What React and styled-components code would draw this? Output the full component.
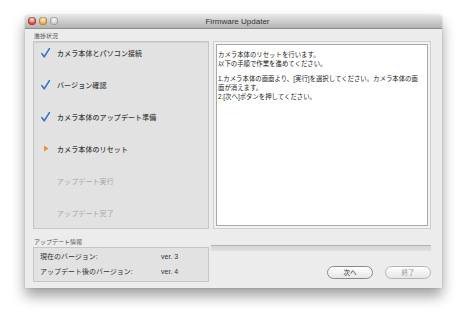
import styled, { createGlobalStyle } from "styled-components"

const GlobalStyle = createGlobalStyle`
  body {
    margin: 0;
    background: #ffffff;
    font-family: "Liberation Sans", "Noto Sans CJK JP", sans-serif;
  }
`

const steps = [
  { label: "カメラ本体とパソコン接続", state: "done" },
  { label: "バージョン確認", state: "done" },
  { label: "カメラ本体のアップデート準備", state: "done" },
  { label: "カメラ本体のリセット", state: "current" },
  { label: "アップデート実行", state: "todo" },
  { label: "アップデート完了", state: "todo" },
]

function Check() {
  return (
    <svg width="9" height="10" viewBox="0 0 9 10">
      <path d="M0.8 5.6 L3.2 8.8 L8.4 0.6" fill="none" stroke="#2c6cc4" strokeWidth="1.5" strokeLinecap="round" strokeLinejoin="round" />
    </svg>
  )
}

function Arrow() {
  return (
    <svg width="6" height="7" viewBox="0 0 6 7">
      <path d="M1 0.5 L5.5 3.5 L1 6.5 Z" fill="#f0902a" />
    </svg>
  )
}

export default function App() {
  return (
    <Page>
      <GlobalStyle />
      <Window>
        <TitleBar>
          <Lights>
            <Light color="#d9453b" />
            <Light color="#f2a53a" />
            <Light color="#c9c9c9" />
          </Lights>
          <Title>Firmware Updater</Title>
        </TitleBar>

        <Body>
          <Column>
            <SectionLabel>進捗状況</SectionLabel>
            <StepsPanel>
              {steps.map((s) => (
                <Step key={s.label} state={s.state}>
                  <Mark>
                    {s.state === "done" && <Check />}
                    {s.state === "current" && <Arrow />}
                  </Mark>
                  {s.label}
                </Step>
              ))}
            </StepsPanel>
            <SectionLabel small>アップデート情報</SectionLabel>
            <InfoBox>
              <InfoRow>
                <span>現在のバージョン:</span>
                <Ver>ver. 3</Ver>
              </InfoRow>
              <InfoRow>
                <span>アップデート後のバージョン:</span>
                <Ver>ver. 4</Ver>
              </InfoRow>
            </InfoBox>
          </Column>

          <Column>
            <SectionLabel />
            <TextFrame>
              <TextArea>
                <p>カメラ本体のリセットを行います。<br />以下の手順で作業を進めてください。</p>
                <p>1.カメラ本体の画面より、[実行]を選択してください。カメラ本体の画面が消えます。<br />2.[次へ]ボタンを押してください。</p>
              </TextArea>
            </TextFrame>
            <Progress />
            <Buttons>
              <Button>次へ</Button>
              <Button disabled>終了</Button>
            </Buttons>
          </Column>
        </Body>
      </Window>
    </Page>
  )
}

const Page = styled.div`
  width: 462px;
  height: 322px;
  padding: 15px 0 0 25px;
  box-sizing: border-box;
`
const Window = styled.div`
  width: 417px;
  height: 273px;
  background: #ececec;
  border-radius: 4px 4px 0 0;
  box-shadow: 0 8px 14px rgba(0, 0, 0, 0.38), 0 0 2px rgba(0, 0, 0, 0.2);
  display: flex;
  flex-direction: column;
  overflow: hidden;
`
const TitleBar = styled.div`
  height: 13px;
  position: relative;
  display: flex;
  align-items: center;
  justify-content: center;
  background: linear-gradient(#e6e6e6, #b3b3b3);
  border-bottom: 1px solid #8e8e8e;
`
const Lights = styled.div`
  position: absolute;
  left: 3px;
  top: 2px;
  display: flex;
  gap: 3px;
`
const Light = styled.div`
  width: 8px;
  height: 8px;
  border-radius: 50%;
  background: radial-gradient(circle at 50% 35%, #ffffff 0%, ${(p) => p.color} 55%);
  box-shadow: inset 0 0 0 0.5px rgba(0, 0, 0, 0.35);
`
const Title = styled.div`
  font-size: 8px;
  color: #333;
  margin-left: 8px;
`
const Body = styled.div`
  flex: 1;
  display: grid;
  grid-template-columns: 176px 218px;
  gap: 4px;
  padding: 0 0 0 8px;
`
const Column = styled.div`
  display: flex;
  flex-direction: column;
`
const SectionLabel = styled.div`
  height: 8px;
  margin: ${(p) => (p.small ? "9px 0 1px 1px" : "3px 0 1px 1px")};
  font-size: 6px;
  line-height: 8px;
  color: #555;
`
const StepsPanel = styled.div`
  height: 188px;
  box-sizing: border-box;
  background: #e2e2e2;
  border: 1px solid #c6c6c6;
  box-shadow: inset 0 1px 1px rgba(0, 0, 0, 0.08);
  display: flex;
  flex-direction: column;
  gap: 11px;
`
const Step = styled.div`
  height: 21px;
  display: flex;
  align-items: center;
  font-size: 7px;
  letter-spacing: 0.1px;
  color: ${(p) => (p.state === "todo" ? "#a6a6a6" : "#3a3a3a")};
  font-weight: ${(p) => (p.state === "todo" ? 400 : 500)};
`
const Mark = styled.span`
  width: 23px;
  display: flex;
  justify-content: center;
`
const InfoBox = styled.div`
  height: 35px;
  box-sizing: border-box;
  background: #e2e2e2;
  border: 1px solid #c6c6c6;
  display: flex;
  flex-direction: column;
  justify-content: center;
  gap: 7px;
  padding-left: 6px;
`
const InfoRow = styled.div`
  display: flex;
  font-size: 7px;
  line-height: 8px;
  color: #333;
  span:first-child {
    width: 121px;
  }
`
const Ver = styled.span`
  font-family: "Liberation Sans", sans-serif;
`
const TextFrame = styled.div`
  height: 188px;
  box-sizing: border-box;
  border: 1px solid #cfcfcf;
  padding: 2px;
  background: #f2f2f2;
`
const TextArea = styled.div`
  height: 100%;
  box-sizing: border-box;
  background: #ffffff;
  border: 1px solid #a9a9a9;
  padding: 5px 3px 5px 1px;
  font-size: 6.4px;
  line-height: 9px;
  color: #222;
  line-break: anywhere;
  p {
    margin: 0 0 6px 0;
  }
`
const Progress = styled.div`
  margin: 16px 0 0 -2px;
  height: 5px;
  border-top: 1px solid #b4b4b4;
  background: linear-gradient(#d6d6d6, #dedede);
`
const Buttons = styled.div`
  display: flex;
  justify-content: flex-end;
  gap: 12px;
  margin-top: 15px;
`
const Button = styled.button`
  width: 46px;
  height: 13px;
  padding: 0;
  border-radius: 6.5px;
  border: 1px solid ${(p) => (p.disabled ? "#b5b5b5" : "#8a8a8a")};
  background: linear-gradient(#ffffff, #e6e6e6);
  font-family: "Noto Sans CJK JP", sans-serif;
  font-size: 6.5px;
  line-height: 11px;
  color: ${(p) => (p.disabled ? "#9a9a9a" : "#222")};
`
